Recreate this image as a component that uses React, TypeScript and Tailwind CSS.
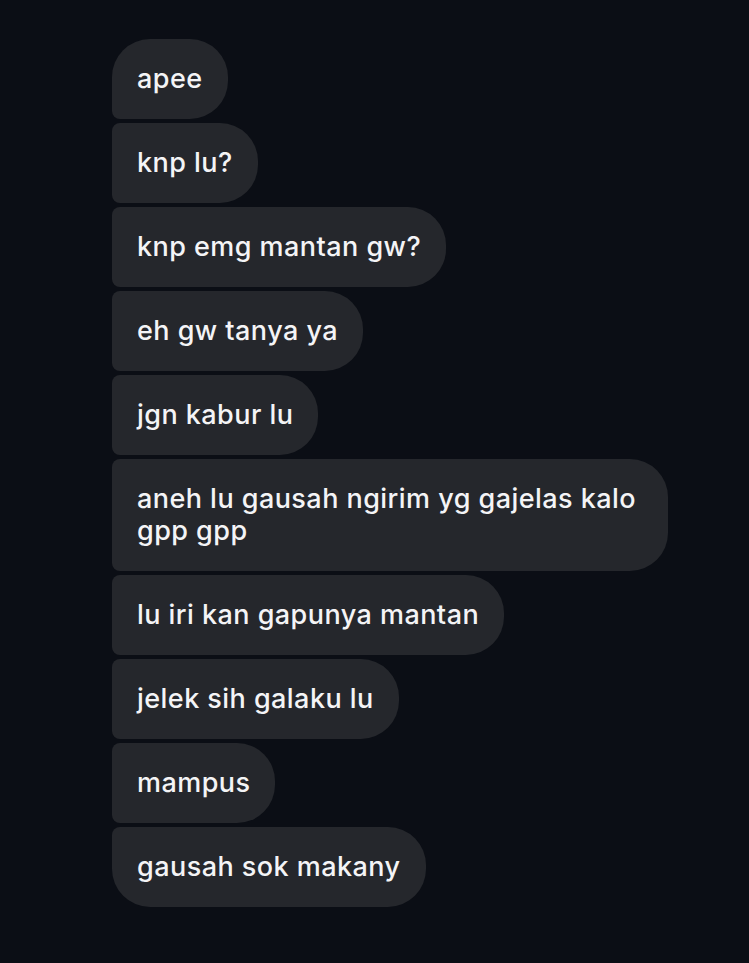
import React from "react";

const messages = [
  "apee",
  "knp lu?",
  "knp emg mantan gw?",
  "eh gw tanya ya",
  "jgn kabur lu",
  "aneh lu gausah ngirim yg gajelas kalo gpp gpp",
  "lu iri kan gapunya mantan",
  "jelek sih galaku lu",
  "mampus",
  "gausah sok makany",
];

export default function App() {
  return (
    <div
      className="w-[749px] h-[963px] overflow-hidden bg-[#0b0e15] pl-[112px] pt-[39px]"
      style={{ fontFamily: "Inter, 'Noto Sans', sans-serif" }}
    >
      <div className="flex flex-col items-start gap-[4px]">
        {messages.map((m, i) => {
          const first = i === 0;
          const last = i === messages.length - 1;
          return (
            <div
              key={i}
              className={
                "max-w-[556px] bg-[#25272c] px-[25px] py-[24px] text-[27px] leading-[32px] tracking-[0.45px] font-medium text-[#f4f4f6] rounded-r-[38px] " +
                (first ? "rounded-tl-[38px] rounded-bl-[8px]" : last ? "rounded-tl-[8px] rounded-bl-[38px]" : "rounded-l-[8px]")
              }
            >
              {m}
            </div>
          );
        })}
      </div>
    </div>
  );
}
